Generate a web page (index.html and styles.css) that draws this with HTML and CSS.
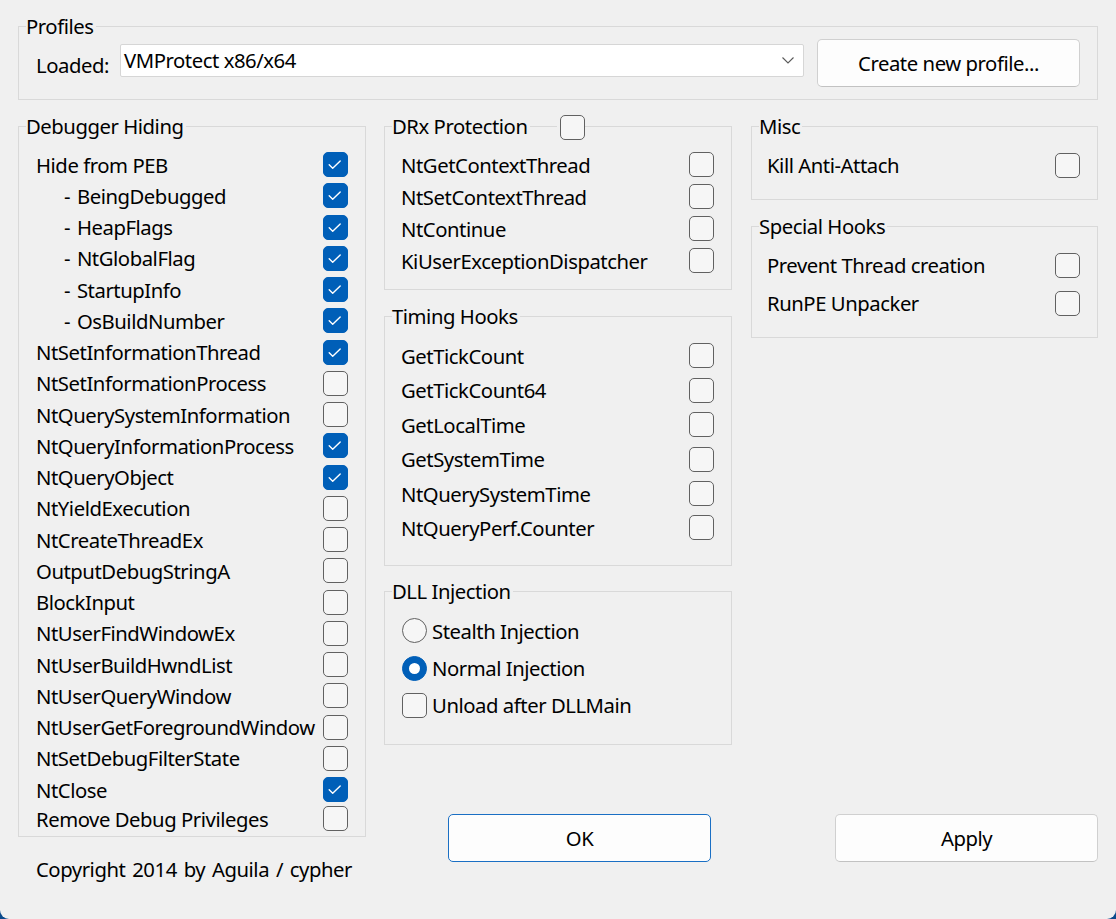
FILE: index.html
```html
<!DOCTYPE html>
<html>
<head>
<meta charset="utf-8">
<title>ScyllaHide Options</title>
<link rel="stylesheet" href="styles.css">
</head>
<body>
<div class="window">
  <fieldset class="group profiles">
    <legend>Profiles</legend>
    <div class="profile-row">
      <span class="loaded">Loaded:</span>
      <div class="combo"><span class="combo-text">VMProtect x86/x64</span><svg class="chev" viewBox="0 0 12 7"><path d="M0.5 0.5 L6 6 L11.5 0.5"/></svg></div>
      <button class="btn create">Create new profile...</button>
    </div>
  </fieldset>

  <div class="columns">
    <div class="col col1">
      <fieldset class="group hiding">
        <legend>Debugger Hiding</legend>
        <div class="rows">
          <div class="row"><span class="lbl">Hide from PEB</span><span class="cb on"><svg viewBox="0 0 23 23"><path d="M5.2 11.8 L8.7 15.2 L16.2 7.9"/></svg></span></div>
          <div class="row"><span class="lbl sub">- BeingDebugged</span><span class="cb on"><svg viewBox="0 0 23 23"><path d="M5.2 11.8 L8.7 15.2 L16.2 7.9"/></svg></span></div>
          <div class="row"><span class="lbl sub">- HeapFlags</span><span class="cb on"><svg viewBox="0 0 23 23"><path d="M5.2 11.8 L8.7 15.2 L16.2 7.9"/></svg></span></div>
          <div class="row"><span class="lbl sub">- NtGlobalFlag</span><span class="cb on"><svg viewBox="0 0 23 23"><path d="M5.2 11.8 L8.7 15.2 L16.2 7.9"/></svg></span></div>
          <div class="row"><span class="lbl sub">- StartupInfo</span><span class="cb on"><svg viewBox="0 0 23 23"><path d="M5.2 11.8 L8.7 15.2 L16.2 7.9"/></svg></span></div>
          <div class="row"><span class="lbl sub">- OsBuildNumber</span><span class="cb on"><svg viewBox="0 0 23 23"><path d="M5.2 11.8 L8.7 15.2 L16.2 7.9"/></svg></span></div>
          <div class="row"><span class="lbl">NtSetInformationThread</span><span class="cb on"><svg viewBox="0 0 23 23"><path d="M5.2 11.8 L8.7 15.2 L16.2 7.9"/></svg></span></div>
          <div class="row"><span class="lbl">NtSetInformationProcess</span><span class="cb"></span></div>
          <div class="row"><span class="lbl">NtQuerySystemInformation</span><span class="cb"></span></div>
          <div class="row"><span class="lbl">NtQueryInformationProcess</span><span class="cb on"><svg viewBox="0 0 23 23"><path d="M5.2 11.8 L8.7 15.2 L16.2 7.9"/></svg></span></div>
          <div class="row"><span class="lbl">NtQueryObject</span><span class="cb on"><svg viewBox="0 0 23 23"><path d="M5.2 11.8 L8.7 15.2 L16.2 7.9"/></svg></span></div>
          <div class="row"><span class="lbl">NtYieldExecution</span><span class="cb"></span></div>
          <div class="row"><span class="lbl">NtCreateThreadEx</span><span class="cb"></span></div>
          <div class="row"><span class="lbl">OutputDebugStringA</span><span class="cb"></span></div>
          <div class="row"><span class="lbl">BlockInput</span><span class="cb"></span></div>
          <div class="row"><span class="lbl">NtUserFindWindowEx</span><span class="cb"></span></div>
          <div class="row"><span class="lbl">NtUserBuildHwndList</span><span class="cb"></span></div>
          <div class="row"><span class="lbl">NtUserQueryWindow</span><span class="cb"></span></div>
          <div class="row"><span class="lbl">NtUserGetForegroundWindow</span><span class="cb"></span></div>
          <div class="row"><span class="lbl">NtSetDebugFilterState</span><span class="cb"></span></div>
          <div class="row"><span class="lbl">NtClose</span><span class="cb on"><svg viewBox="0 0 23 23"><path d="M5.2 11.8 L8.7 15.2 L16.2 7.9"/></svg></span></div>
          <div class="row last"><span class="lbl">Remove Debug Privileges</span><span class="cb"></span></div>
        </div>
      </fieldset>
      <p class="copyright">Copyright 2014 by Aguila / cypher</p>
    </div>

    <div class="col col2">
      <fieldset class="group drx">
        <legend class="legend-cb"><span class="legend-text">DRx Protection</span><span class="legend-line"></span><span class="cb legend-box"></span></legend>
        <div class="rows">
          <div class="row"><span class="lbl">NtGetContextThread</span><span class="cb"></span></div>
          <div class="row"><span class="lbl">NtSetContextThread</span><span class="cb"></span></div>
          <div class="row"><span class="lbl">NtContinue</span><span class="cb"></span></div>
          <div class="row"><span class="lbl">KiUserExceptionDispatcher</span><span class="cb"></span></div>
        </div>
      </fieldset>
      <fieldset class="group timing">
        <legend>Timing Hooks</legend>
        <div class="rows">
          <div class="row"><span class="lbl">GetTickCount</span><span class="cb"></span></div>
          <div class="row"><span class="lbl">GetTickCount64</span><span class="cb"></span></div>
          <div class="row"><span class="lbl">GetLocalTime</span><span class="cb"></span></div>
          <div class="row"><span class="lbl">GetSystemTime</span><span class="cb"></span></div>
          <div class="row"><span class="lbl">NtQuerySystemTime</span><span class="cb"></span></div>
          <div class="row"><span class="lbl">NtQueryPerf.Counter</span><span class="cb"></span></div>
        </div>
      </fieldset>
      <fieldset class="group dll">
        <legend>DLL Injection</legend>
        <div class="rows">
          <div class="row opt"><span class="radio"></span><span class="lbl">Stealth Injection</span></div>
          <div class="row opt"><span class="radio on"></span><span class="lbl">Normal Injection</span></div>
          <div class="row opt"><span class="cb"></span><span class="lbl">Unload after DLLMain</span></div>
        </div>
      </fieldset>
      <button class="btn ok">OK</button>
    </div>

    <div class="col col3">
      <fieldset class="group misc">
        <legend>Misc</legend>
        <div class="rows">
          <div class="row"><span class="lbl">Kill Anti-Attach</span><span class="cb"></span></div>
        </div>
      </fieldset>
      <fieldset class="group special">
        <legend>Special Hooks</legend>
        <div class="rows">
          <div class="row"><span class="lbl">Prevent Thread creation</span><span class="cb"></span></div>
          <div class="row"><span class="lbl">RunPE Unpacker</span><span class="cb"></span></div>
        </div>
      </fieldset>
      <button class="btn apply">Apply</button>
    </div>
  </div>
</div>
</body>
</html>
```

FILE: styles.css
```css
html {
  background: #0b4a8c;
}

body {
  margin: 0;
  font-family: "Noto Sans", "Open Sans", "DejaVu Sans", sans-serif;
  font-size: 20.3px;
  letter-spacing: -0.45px;
  line-height: 24px;
  color: #000;
}

.window {
  width: 1116px;
  height: 919px;
  background: #f0f0f0;
  border-radius: 0 0 9px 9px;
  overflow: hidden;
  padding-top: 15px;
  box-sizing: border-box;
}

/* group boxes */
.group {
  margin: 0;
  padding: 0;
  border: 1px solid #d9d9d9;
  min-inline-size: 0;
  box-sizing: border-box;
}

.group > legend {
  padding: 0 2px 0 0;
  margin-left: 7px;
  line-height: 23px;
  height: 23px;
}

.profiles {
  margin: 0 18px;
}

.profile-row {
  display: flex;
  align-items: flex-start;
  padding: 1px 17px 12px 17px;
}

.loaded {
  width: 84px;
  flex: none;
  margin-top: 14px;
}

.combo {
  width: 684px;
  height: 33px;
  flex: none;
  margin-top: 5px;
  box-sizing: border-box;
  background: #fff;
  border: 1px solid #d6d6d6;
  border-radius: 2px;
  display: flex;
  align-items: center;
  justify-content: space-between;
  padding: 0 9px 0 3px;
  line-height: 31px;
}

.chev {
  width: 12px;
  height: 7px;
  margin-top: -1px;
}

.chev path {
  fill: none;
  stroke: #5a5a5a;
  stroke-width: 1.1;
}

.btn {
  font: inherit;
  letter-spacing: inherit;
  color: #000;
  background: #fdfdfd;
  border: 1px solid #d0d0d0;
  border-bottom-color: #c2c2c2;
  border-radius: 5px;
  width: 263px;
  height: 48px;
  padding: 0;
  line-height: 24px;
  flex: none;
}

.create {
  margin-left: 13px;
}

/* columns */
.columns {
  display: flex;
  align-items: flex-start;
  margin: 15px 18px 0 18px;
}

.col {
  display: flex;
  flex-direction: column;
  flex: none;
}

.col1 { width: 348px; }
.col2 { width: 348px; margin-left: 18px; }
.col3 { width: 347px; margin-left: 19px; }

.rows {
  box-sizing: border-box;
}

.row {
  display: flex;
  align-items: center;
  justify-content: space-between;
  white-space: nowrap;
}

.lbl {
  min-width: 0;
}

.lbl.sub {
  padding-left: 28px;
  word-spacing: 2px;
}

/* checkboxes */
.cb {
  display: block;
  flex: none;
  width: 25px;
  height: 25px;
  box-sizing: border-box;
  border: 1px solid #616161;
  border-radius: 5px;
  background: #f6f6f6;
}

.cb.on {
  background: #005fb8;
  border-color: #005fb8;
}

.cb svg {
  display: block;
  width: 23px;
  height: 23px;
}

.cb svg path {
  fill: none;
  stroke: #fff;
  stroke-width: 1.4;
  stroke-linecap: round;
  stroke-linejoin: round;
}

.radio {
  display: flex;
  align-items: center;
  justify-content: center;
  flex: none;
  width: 25px;
  height: 25px;
  box-sizing: border-box;
  border: 1px solid #616161;
  border-radius: 50%;
  background: #f6f6f6;
}

.radio.on {
  background: #005fb8;
  border-color: #005fb8;
}

.radio.on::after {
  content: "";
  width: 11px;
  height: 11px;
  border-radius: 50%;
  background: #fff;
}

/* Debugger hiding */
.hiding .rows {
  padding: 11px 17px 1.5px 17px;
}

.hiding .row {
  height: 31.25px;
}

.hiding .row.last {
  margin-top: -2px;
}

.copyright {
  margin: 20px 0 0 0;
  padding-left: 18px;
  word-spacing: 2px;
  white-space: nowrap;
}

/* DRx */
.legend-cb {
  display: flex;
  align-items: flex-start;
  width: 193px;
  padding: 0 !important;
}

.legend-text {
  flex: none;
  padding-right: 2px;
}

.legend-line {
  flex: 1;
  height: 23px;
  margin-right: 3px;
  background: linear-gradient(#d9d9d9, #d9d9d9) no-repeat 0 11px / 100% 1px;
}

.legend-box {
  margin-bottom: -2px;
}

.drx .rows {
  padding: 10.5px 17px 12.5px 16px;
}

.drx .row {
  height: 32px;
}

.timing {
  margin-top: 15px;
}

.timing .rows {
  padding: 10.8px 17px 19.8px 16px;
}

.timing .row {
  height: 34.4px;
}

.dll {
  margin-top: 14px;
}

.dll .rows {
  padding: 9.4px 17px 19.85px 17px;
}

.dll .row {
  height: 37.25px;
  justify-content: flex-start;
}

.dll .row .lbl {
  margin-left: 5px;
}

.ok {
  margin: 69px 0 0 64px;
  border-color: #1a6fc4;
}

/* Misc / special */
.misc .rows {
  padding: 11.5px 17px 18.5px 15px;
}

.misc .row {
  height: 31px;
}

.special {
  margin-top: 15px;
}

.special .rows {
  padding: 8px 17px 15px 15px;
}

.special .row {
  height: 38px;
}

.apply {
  margin: 476px 0 0 84px;
}
```
